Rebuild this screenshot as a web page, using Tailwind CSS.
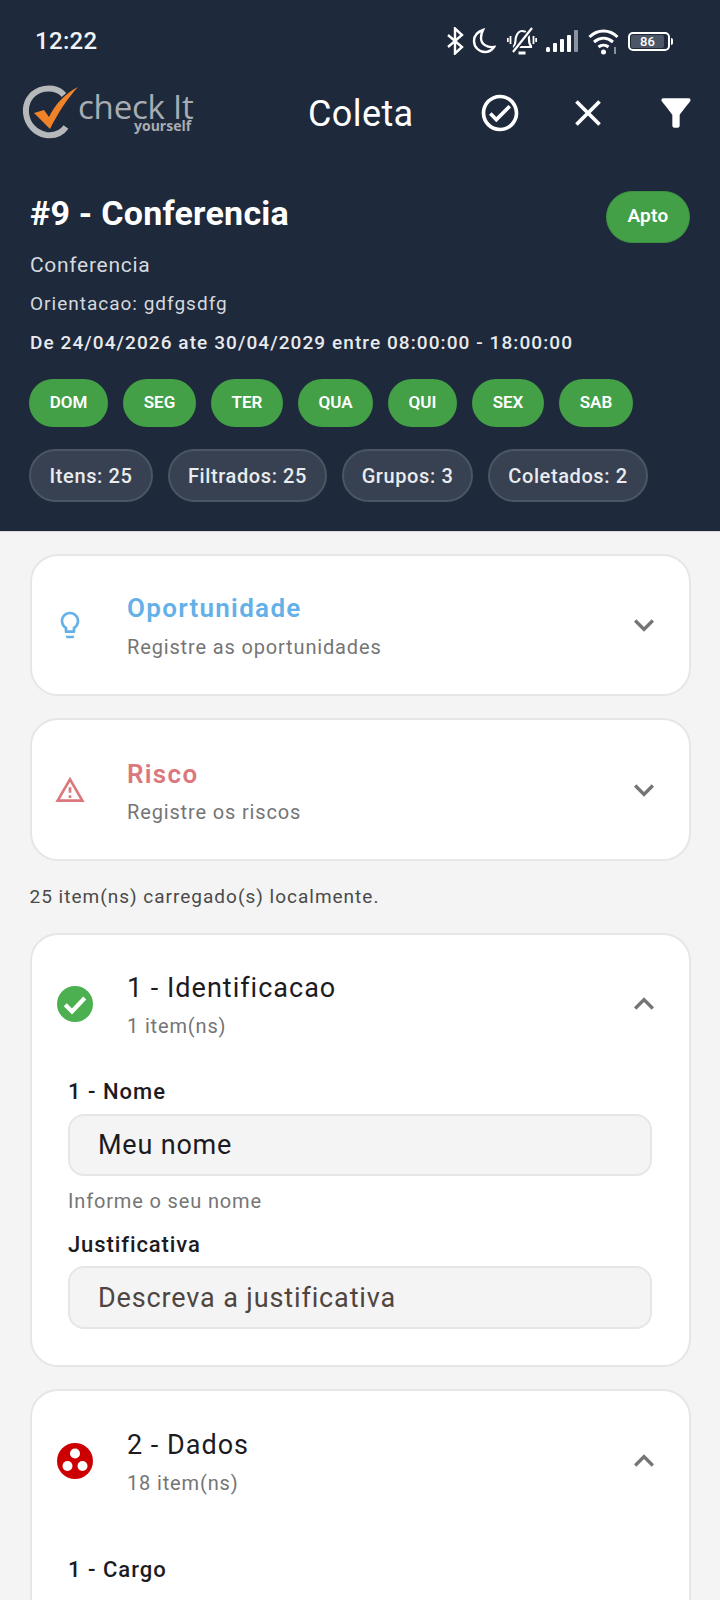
<!DOCTYPE html>
<html lang="pt">
  <head>
    <meta charset="UTF-8" />
    <meta name="viewport" content="width=device-width, initial-scale=1.0" />
    <title>Coleta</title>
    <script src="https://cdn.jsdelivr.net/npm/@tailwindcss/browser@4"></script>
  </head>
  <body class="h-[1600px] overflow-hidden bg-[#f4f4f4] font-['Roboto',sans-serif]">

    <!-- Header -->
    <header class="h-[532px] bg-[#1e293b] border-b border-[#d9dbde]">
      <!-- Status bar -->
      <div class="h-[82px] flex items-center pl-[35px] pr-[47px] justify-between">
        <span class="text-[24px] font-medium text-[#f1f3f5] tracking-[0.3px]">12:22</span>
        <div class="flex items-center gap-[9px]">
          <svg class="w-[18px] h-[28px]" viewBox="0 0 18 28" fill="none" stroke="#fff" stroke-width="2.4"><path d="M2 8l14 12-7 6.5V1.5L16 8 2 20"/></svg>
          <svg class="w-[24px] h-[26px] ml-[-1px] mr-[2px]" viewBox="0 0 24 26" fill="none" stroke="#fff" stroke-width="2.4"><path d="M11 2C5 4 2 8 2 13c0 6 5 11 11 11 4 0 7-2 9-5-7 1-13-3-13-9 0-3 1-6 2-8z"/></svg>
          <svg class="w-[30px] h-[30px]" viewBox="0 0 30 30" fill="none" stroke="#fff" stroke-width="2.2"><path d="M7 20c2-2 1-6 2-9 1-3 3-6 6-6 5 0 7 4 7 8 0 3 0 5 2 7v1H7z"/><path d="M11.5 27h7" stroke-width="3"/><path d="M25 2L6 26" stroke="#1e293b" stroke-width="5"/><path d="M25 2L6 26"/><path d="M3.500 10v8M.8 12v4M26.500 10v8M29.200 12v4" stroke-width="1.800"/></svg>
          <svg class="w-[33px] h-[24px]" viewBox="0 0 33 24"><rect x="0" y="18" width="4" height="5" rx="1.5" fill="#fff"/><rect x="7" y="14" width="4" height="9" rx="1" fill="#fff"/><rect x="14" y="10" width="4" height="13" rx="1" fill="#fff"/><rect x="21" y="6" width="4" height="17" rx="1" fill="#fff"/><rect x="28" y="1" width="4" height="22" rx="1" fill="#8b93a0"/></svg>
          <svg class="w-[31px] h-[27px]" viewBox="0 0 31 27" fill="none" stroke="#fff" stroke-width="3"><path d="M1.500 9c8-8 20-8 28 0"/><path d="M6 14c6-5 13-5 19 0"/><path d="M10.500 19c3-2.500 7-2.500 10 0"/><circle cx="15.500" cy="24" r="2.500" fill="#fff" stroke="none"/><path d="M27 19v7" stroke="#aeb4bd" stroke-width="1.500"/></svg>
          <div class="flex items-center">
            <div class="w-[42px] h-[19px] border-2 border-white rounded-[5px] p-[1px] flex">
              <div class="w-[33px] bg-[#4c5667] rounded-[2px] flex items-center justify-center text-[13px] leading-none font-medium text-white">86</div>
            </div>
            <div class="w-[2px] h-[7px] ml-[1px] bg-white rounded-r"></div>
          </div>
        </div>
      </div>

      <!-- App bar -->
      <div class="h-[62px] flex items-center pl-[22px]">
        <svg class="w-[174px] h-[58px] shrink-0" viewBox="0 0 174 58">
          <path d="M42 11C36 4 26 3 18 6 8 10 3 19 4 29c1 11 9 20 20 22 8 1 15-1 20-8" fill="none" stroke="#b6b8ba" stroke-width="6"/>
          <path d="M12 29l10-3 5 7C33 21 42 10 56 3 45 15 36 29 28 45z" fill="#f0822a"/>
          <text x="56" y="35" font-family="Open Sans" font-size="33" letter-spacing="-0.2" fill="#a9adb3">check It</text>
          <text x="112" y="47" font-family="Open Sans" font-size="14" font-weight="700" fill="#a9adb3">yourself</text>
        </svg>
        <h1 class="ml-[112px] w-[144px] pt-[2px] text-[36px] leading-none text-white tracking-[0.4px]">Coleta</h1>
        <svg class="w-[44px] h-[44px] ml-[26px]" viewBox="0 0 24 24" fill="#fff"><path d="M12 2C6.48 2 2 6.48 2 12s4.48 10 10 10 10-4.48 10-10S17.52 2 12 2zm0 18c-4.41 0-8-3.59-8-8s3.59-8 8-8 8 3.59 8 8-3.59 8-8 8zm4.59-12.42L10 14.17l-2.59-2.58L6 13l4 4 8-8z"/></svg>
        <svg class="w-[44px] h-[44px] ml-[44px]" viewBox="0 0 24 24" fill="#fff"><path d="M19 6.41L17.59 5 12 10.59 6.41 5 5 6.41 10.59 12 5 17.59 6.41 19 12 13.41 17.59 19 19 17.59 13.41 12z"/></svg>
        <svg class="w-[44px] h-[44px] ml-[44px]" viewBox="0 0 24 24" fill="#fff"><path d="M4.25 5.61C6.27 8.2 10 13 10 13v6c0 .55.45 1 1 1h2c.55 0 1-.45 1-1v-6s3.72-4.8 5.74-7.39c.51-.66.04-1.61-.79-1.61H5.04c-.83 0-1.3.95-.79 1.61z"/></svg>
      </div>

      <!-- Info -->
      <div class="px-[30px] pt-[47px]">
        <div class="flex justify-between items-start h-[52px]">
          <h2 class="text-[34px] leading-[44px] font-bold text-white tracking-[0.25px]">#9 - Conferencia</h2>
          <span class="w-[84px] h-[52px] pb-[2px] rounded-full bg-[#43a047] border border-[#3c9141] flex items-center justify-center text-[19px] font-semibold text-white tracking-[0.3px]">Apto</span>
        </div>
        <p class="text-[21px] leading-[30px] mt-[7px] text-[#d5d9df] tracking-[0.7px]">Conferencia</p>
        <p class="text-[19px] leading-[26px] mt-[11px] text-[#d5d9df] tracking-[1px]">Orientacao: gdfgsdfg</p>
        <p class="text-[19px] leading-[26px] mt-[13px] font-medium text-[#e8eaee] tracking-[1.08px]">De 24/04/2026 ate 30/04/2029 entre 08:00:00 - 18:00:00</p>

        <div class="flex gap-[15px] mt-[23px] ml-[-1px]">
          <span class="w-[79px] h-[48px] rounded-full bg-[#43a047] flex items-center justify-center text-[17px] font-semibold text-white">DOM</span>
          <span class="w-[73px] h-[48px] rounded-full bg-[#43a047] flex items-center justify-center text-[17px] font-semibold text-white">SEG</span>
          <span class="w-[72px] h-[48px] rounded-full bg-[#43a047] flex items-center justify-center text-[17px] font-semibold text-white">TER</span>
          <span class="w-[75px] h-[48px] rounded-full bg-[#43a047] flex items-center justify-center text-[17px] font-semibold text-white">QUA</span>
          <span class="w-[69px] h-[48px] rounded-full bg-[#43a047] flex items-center justify-center text-[17px] font-semibold text-white">QUI</span>
          <span class="w-[72px] h-[48px] rounded-full bg-[#43a047] flex items-center justify-center text-[17px] font-semibold text-white">SEX</span>
          <span class="w-[74px] h-[48px] rounded-full bg-[#43a047] flex items-center justify-center text-[17px] font-semibold text-white">SAB</span>
        </div>

        <div class="flex gap-[15px] mt-[22px] ml-[-1px]">
          <span class="w-[124px] h-[53px] rounded-full bg-[#374151] border-2 border-[#4b5563] flex items-center justify-center text-[20px] font-medium text-[#e9ebee] tracking-[0.6px]">Itens: 25</span>
          <span class="w-[159px] h-[53px] rounded-full bg-[#374151] border-2 border-[#4b5563] flex items-center justify-center text-[20px] font-medium text-[#e9ebee] tracking-[0.6px]">Filtrados: 25</span>
          <span class="w-[131px] h-[53px] rounded-full bg-[#374151] border-2 border-[#4b5563] flex items-center justify-center text-[20px] font-medium text-[#e9ebee] tracking-[0.6px]">Grupos: 3</span>
          <span class="w-[160px] h-[53px] rounded-full bg-[#374151] border-2 border-[#4b5563] flex items-center justify-center text-[20px] font-medium text-[#e9ebee] tracking-[0.6px]">Coletados: 2</span>
        </div>
      </div>
    </header>

    <main class="px-[29.5px] pt-[22px]">
      <!-- Oportunidade -->
      <section class="h-[142px] rounded-[28px] bg-white border-2 border-[#e6e6e6] flex items-center pl-[22.5px] pr-[24.5px]">
        <svg class="w-[32px] h-[32px] shrink-0" viewBox="0 0 24 24" fill="#64b0e8"><path d="M9 21c0 .55.45 1 1 1h4c.55 0 1-.45 1-1v-1H9v1zm3-19C8.14 2 5 5.14 5 9c0 2.38 1.19 4.47 3 5.74V17c0 .55.45 1 1 1h6c.55 0 1-.45 1-1v-2.26c1.81-1.27 3-3.36 3-5.74 0-3.86-3.14-7-7-7zm2.85 11.1l-.85.6V16h-4v-2.3l-.85-.6C7.8 12.16 7 10.63 7 9c0-2.76 2.24-5 5-5s5 2.24 5 5c0 1.63-.8 3.16-2.15 4.1z"/></svg>
        <div class="ml-[41px] mt-[2px] flex-1">
          <h3 class="text-[26px] leading-[32px] font-semibold text-[#64b0e8] tracking-[1.3px]">Oportunidade</h3>
          <p class="text-[20px] leading-[26px] mt-[10px] text-[#757575] tracking-[0.85px]">Registre as oportunidades</p>
        </div>
        <svg class="w-[40px] h-[40px] shrink-0" viewBox="0 0 24 24" fill="#757575"><path d="M16.59 8.59L12 13.17 7.41 8.59 6 10l6 6 6-6z"/></svg>
      </section>

      <!-- Risco -->
      <section class="h-[143px] mt-[22px] rounded-[28px] bg-white border-2 border-[#e6e6e6] flex items-center pl-[22.5px] pr-[24.5px]">
        <svg class="w-[32px] h-[32px] shrink-0" viewBox="0 0 24 24" fill="#da787d"><path d="M12 5.99L19.53 19H4.47L12 5.99M12 2L1 21h22L12 2zm1 14h-2v2h2v-2zm0-6h-2v4h2v-4z"/></svg>
        <div class="ml-[41px] mt-[4px] flex-1">
          <h3 class="text-[26px] leading-[32px] font-semibold text-[#da787d] tracking-[1.3px]">Risco</h3>
          <p class="text-[20px] leading-[26px] mt-[9px] text-[#757575] tracking-[0.85px]">Registre os riscos</p>
        </div>
        <svg class="w-[40px] h-[40px] shrink-0" viewBox="0 0 24 24" fill="#757575"><path d="M16.59 8.59L12 13.17 7.41 8.59 6 10l6 6 6-6z"/></svg>
      </section>

      <p class="text-[19px] leading-[26px] mt-[23px] text-[#4a4a4a] tracking-[1px]">25 item(ns) carregado(s) localmente.</p>

      <!-- Grupo 1 -->
      <section class="h-[434px] mt-[23px] rounded-[28px] bg-white border-2 border-[#e6e6e6] pl-[25.5px] pr-[24.5px] pt-[34px]">
        <div class="flex items-center h-[70px]">
          <svg class="w-[36px] h-[36px] shrink-0" viewBox="0 0 24 24"><circle cx="12" cy="12" r="12" fill="#4caf50"/><path d="M5.500 12.500l4.500 4.500 8.500-9" fill="none" stroke="#fff" stroke-width="2.800"/></svg>
          <div class="ml-[34px] mt-[3px] flex-1">
            <h3 class="text-[27px] leading-[32px] text-[#1c1b1f] tracking-[1px]">1 - Identificacao</h3>
            <p class="text-[20px] leading-[26px] mt-[9px] text-[#757575] tracking-[0.85px]">1 item(ns)</p>
          </div>
          <svg class="w-[40px] h-[40px] shrink-0" viewBox="0 0 24 24" fill="#757575"><path d="M12 8l-6 6 1.41 1.41L12 10.83l4.59 4.58L18 14z"/></svg>
        </div>
        <div class="ml-[-25.5px] mr-[-24.5px] pl-[36.5px] pr-[37px] mt-[39px]">
          <label class="block text-[22px] leading-[28px] font-medium text-[#1c1b1f] tracking-[1px]">1 - Nome</label>
          <div class="h-[62px] mt-[8px] pt-[1px] rounded-[16px] bg-[#f4f4f4] border-2 border-[#e6e6e6] flex items-center pl-[28px] text-[27px] text-[#1c1b1f] tracking-[0.8px]">Meu nome</div>
          <p class="text-[20px] leading-[26px] mt-[12px] text-[#757575] tracking-[0.85px]">Informe o seu nome</p>
          <label class="block text-[22px] leading-[28px] mt-[17px] font-medium text-[#1c1b1f] tracking-[0.9px]">Justificativa</label>
          <div class="h-[63px] mt-[7px] pt-[1px] rounded-[16px] bg-[#f4f4f4] border-2 border-[#e6e6e6] flex items-center pl-[28px] text-[27px] text-[#4e4541] tracking-[0.87px]">Descreva a justificativa</div>
        </div>
      </section>

      <!-- Grupo 2 -->
      <section class="h-[300px] mt-[22px] rounded-[28px] bg-white border-2 border-[#e6e6e6] pl-[25.5px] pr-[24.5px] pt-[35px]">
        <div class="flex items-center h-[70px]">
          <svg class="w-[36px] h-[36px] shrink-0" viewBox="0 0 36 36"><circle cx="18" cy="18" r="18" fill="#cc0000"/><circle cx="18" cy="10.5" r="5" fill="#fff"/><circle cx="10.5" cy="23" r="5" fill="#fff"/><circle cx="25.5" cy="23" r="5" fill="#fff"/></svg>
          <div class="ml-[34px] mt-[3px] flex-1">
            <h3 class="text-[27px] leading-[32px] text-[#1c1b1f] tracking-[1px]">2 - Dados</h3>
            <p class="text-[20px] leading-[26px] mt-[9px] text-[#757575] tracking-[0.85px]">18 item(ns)</p>
          </div>
          <svg class="w-[40px] h-[40px] shrink-0" viewBox="0 0 24 24" fill="#757575"><path d="M12 8l-6 6 1.41 1.41L12 10.83l4.59 4.58L18 14z"/></svg>
        </div>
        <div class="ml-[-25.5px] mr-[-24.5px] pl-[36.5px] pr-[37px] mt-[60px]">
          <label class="block text-[22px] leading-[28px] font-medium text-[#1c1b1f] tracking-[1px]">1 - Cargo</label>
        </div>
      </section>
    </main>
  </body>
</html>
